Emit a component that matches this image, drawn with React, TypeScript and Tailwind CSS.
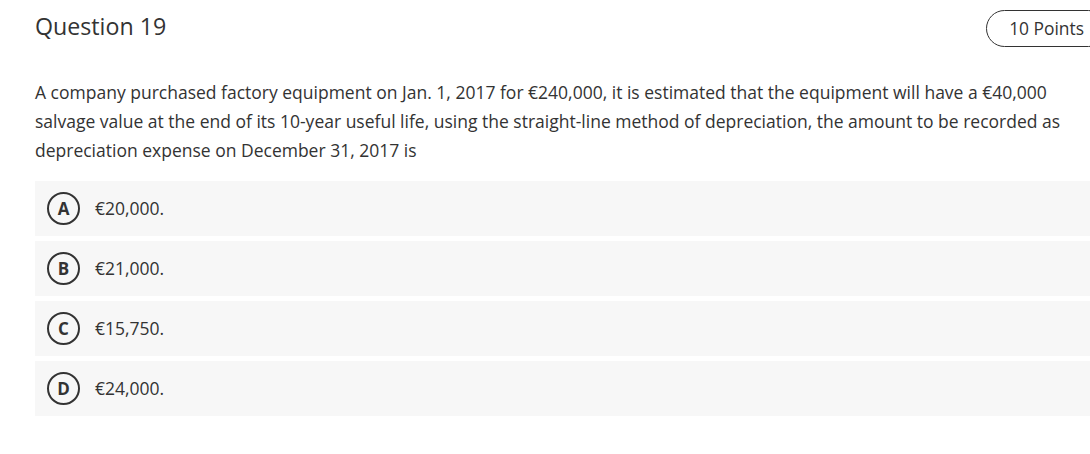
export default function App() {
  const options = [
    { key: 'A', text: '€20,000.' },
    { key: 'B', text: '€21,000.' },
    { key: 'C', text: '€15,750.' },
    { key: 'D', text: '€24,000.' },
  ]

  return (
    <div className="w-[1090px] h-[454px] overflow-hidden bg-white text-[#333333] font-['Open_Sans',sans-serif]">
      <div className="w-[1072px] ml-[35px]">
        <div className="flex items-center justify-between pt-[10px]">
          <h2 className="text-[23.2px] leading-none -mt-[3px]">Question 19</h2>
          <div className="h-[37px] flex items-center px-[22px] rounded-full border border-[#333333] text-[17.4px]">
            10 Points
          </div>
        </div>

        <p className="mt-[31px] text-[17.5px] leading-[29px]">
          A company purchased factory equipment on Jan. 1, 2017 for €240,000, it is estimated that the equipment will have a €40,000
          salvage value at the end of its 10-year useful life, using the straight-line method of depreciation, the amount to be recorded as
          depreciation expense on December 31, 2017 is
        </p>

        <div className="mt-[16px] flex flex-col gap-[5px]">
          {options.map((o) => (
            <div key={o.key} className="h-[55px] flex items-center pl-[12px] bg-[#f7f7f7]">
              <span className="w-[33px] h-[33px] rounded-full border-2 border-[#333333] flex items-center justify-center text-[17px] font-bold leading-none">
                {o.key}
              </span>
              <span className="ml-[15px] text-[17.5px]">{o.text}</span>
            </div>
          ))}
        </div>
      </div>
    </div>
  )
}
